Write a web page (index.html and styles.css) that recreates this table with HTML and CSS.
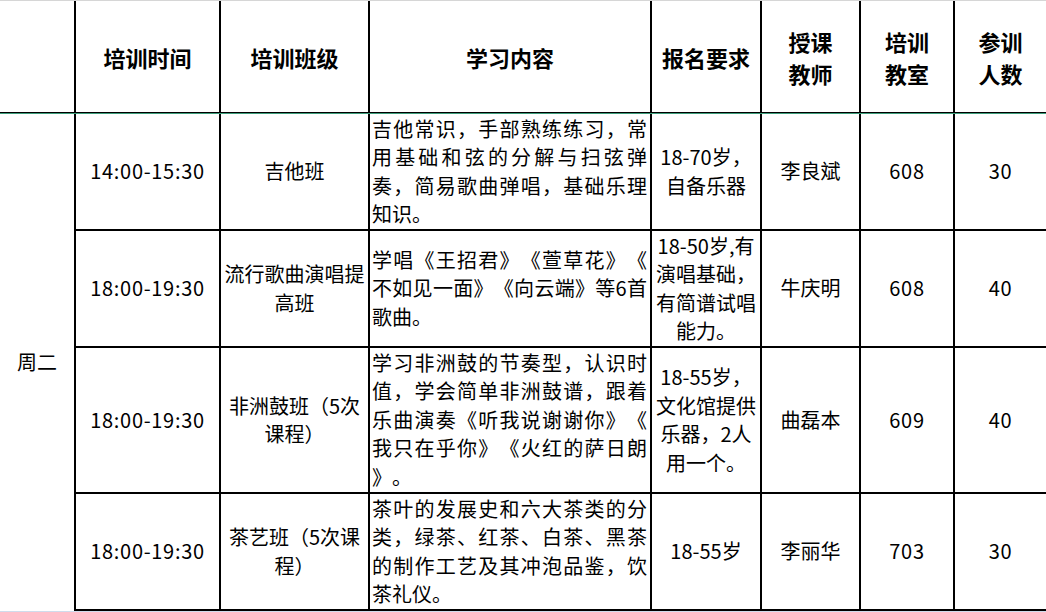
FILE: index.html
```html
<!DOCTYPE html>
<html lang="zh-CN">
<head>
<meta charset="utf-8">
<title>培训课程表</title>
<link rel="stylesheet" href="styles.css">
</head>
<body>
<div class="sheet">
  <div class="cell head"></div>
  <div class="cell head">培训时间</div>
  <div class="cell head">培训班级</div>
  <div class="cell head">学习内容</div>
  <div class="cell head">报名要求</div>
  <div class="cell head">授课<br>教师</div>
  <div class="cell head">培训<br>教室</div>
  <div class="cell head last">参训<br>人数</div>
  <div class="sep"></div>

  <div class="cell day">周二</div>

  <div class="cell num">14:00-15:30</div>
  <div class="cell">吉他班</div>
  <div class="cell text">
    <span class="ln full">吉他常识，手部熟练练习，常</span>
    <span class="ln full">用基础和弦的分解与扫弦弹</span>
    <span class="ln full">奏，简易歌曲弹唱，基础乐理</span>
    <span class="ln">知识。</span>
  </div>
  <div class="cell req"><span class="ln">18-70岁，</span><span class="ln">自备乐器</span></div>
  <div class="cell">李良斌</div>
  <div class="cell num">608</div>
  <div class="cell num last">30</div>

  <div class="cell num">18:00-19:30</div>
  <div class="cell">流行歌曲演唱提高班</div>
  <div class="cell text">
    <span class="ln full">学唱《王招君》《萱草花》《</span>
    <span class="ln full">不如见一面》《向云端》等6首</span>
    <span class="ln">歌曲。</span>
  </div>
  <div class="cell req"><span class="ln">18-50岁,有</span><span class="ln">演唱基础，</span><span class="ln">有简谱试唱</span><span class="ln">能力。</span></div>
  <div class="cell">牛庆明</div>
  <div class="cell num">608</div>
  <div class="cell num last">40</div>

  <div class="cell num">18:00-19:30</div>
  <div class="cell">非洲鼓班（5次课程）</div>
  <div class="cell text">
    <span class="ln full">学习非洲鼓的节奏型，认识时</span>
    <span class="ln full">值，学会简单非洲鼓谱，跟着</span>
    <span class="ln full">乐曲演奏《听我说谢谢你》《</span>
    <span class="ln full">我只在乎你》《火红的萨日朗</span>
    <span class="ln">》。</span>
  </div>
  <div class="cell req"><span class="ln">18-55岁，</span><span class="ln">文化馆提供</span><span class="ln">乐器，2人</span><span class="ln">用一个。</span></div>
  <div class="cell">曲磊本</div>
  <div class="cell num">609</div>
  <div class="cell num last">40</div>

  <div class="cell num">18:00-19:30</div>
  <div class="cell">茶艺班（5次课程）</div>
  <div class="cell text">
    <span class="ln full">茶叶的发展史和六大茶类的分</span>
    <span class="ln full">类，绿茶、红茶、白茶、黑茶</span>
    <span class="ln full">的制作工艺及其冲泡品鉴，饮</span>
    <span class="ln">茶礼仪。</span>
  </div>
  <div class="cell req"><span class="ln">18-55岁</span></div>
  <div class="cell">李丽华</div>
  <div class="cell num">703</div>
  <div class="cell num last">30</div>
</div>
</body>
</html>
```

FILE: styles.css
```css
html, body {
  margin: 0;
  padding: 0;
  background: #ffffff;
}

.sheet {
  display: grid;
  grid-template-columns: 76px 145px 149px 282px 110px 99px 94px 91px;
  grid-template-rows: 112px 1px 117px 117px 146px 117px;
  border-top: 1px solid #d6d6d6;
  border-bottom: 1px solid #cfdcec;
  width: 1046px;
  font-family: "Noto Sans CJK SC", "Noto Sans", sans-serif;
  font-size: 20px;
  line-height: 28.5px;
  color: #000;
  text-spacing-trim: space-all;
}

.cell {
  box-sizing: border-box;
  border-right: 2px solid #000;
  border-bottom: 2px solid #000;
  display: flex;
  flex-direction: column;
  align-items: center;
  justify-content: center;
  text-align: center;
  padding: 0 2px;
  overflow: hidden;
}

.cell.last {
  border-right: none;
}

.num {
  letter-spacing: 0.7px;
}

.head {
  border-bottom: 1px solid #000;
  font-weight: 700;
  font-size: 22px;
  line-height: 32px;
}

.sep {
  grid-column: 1 / -1;
  background: #3d9d7b;
}

.day {
  grid-column: 1;
  grid-row: 3 / span 4;
  border-bottom: none;
}

.text {
  align-items: stretch;
  text-align: left;
  padding: 0 3px 0 2px;
}

.ln {
  display: block;
  white-space: nowrap;
}

.text .ln.full {
  text-align: justify;
  text-align-last: justify;
}

.req {
  padding: 0 3px;
}
```
